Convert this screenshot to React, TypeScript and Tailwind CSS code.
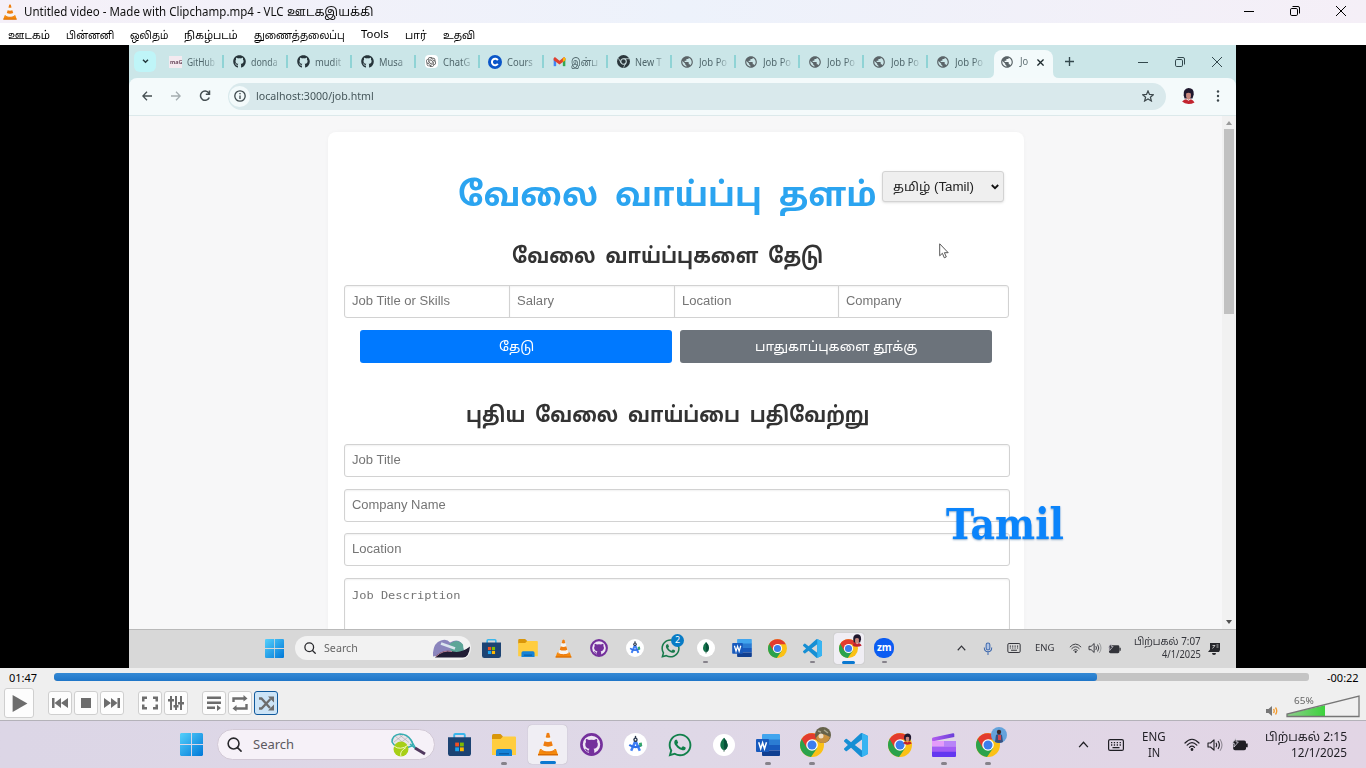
import React, { useLayoutEffect, useRef } from "react";
import { FaGithub, FaWhatsapp } from "react-icons/fa";
import { MdPublic } from "react-icons/md";
import { SiOpenai } from "react-icons/si";

/* Single line of text, stretched to fill the width of its box. */
function Fit({ className, children }: { className: string; children: React.ReactNode }) {
  const box = useRef<HTMLDivElement>(null);
  const text = useRef<HTMLSpanElement>(null);
  useLayoutEffect(() => {
    if (!box.current || !text.current) return;
    const s = box.current.clientWidth / text.current.offsetWidth;
    text.current.style.transform = `scaleX(${s})`;
  }, []);
  return (
    <div ref={box} className={`shrink-0 whitespace-nowrap ${className}`}>
      <span ref={text} className="inline-block origin-left">{children}</span>
    </div>
  );
}

const Cone = ({ className }: { className: string }) => (
  <svg viewBox="0 0 24 24" className={className}>
    <path d="M4 17h16l2 6H2z" fill="#f58a0b" />
    <path d="M2 22h20v1.5H2z" fill="#d96a00" />
    <path d="M10.7 1.5c.5-1 2.100-1 2.600 0L18.500 18.500c-2.500 2.300-10.500 2.300-13 0z" fill="#f7f5f2" />
    <path d="M10.700 1.500c.5-1 2.100-1 2.600 0l1 3.700c-1.200.7-3.400.7-4.600 0z" fill="#ee7d10" />
    <path d="M8.500 9.200c1.800 1 5.200 1 7 0l1.300 4.300c-2.500 1.500-7.100 1.500-9.600 0z" fill="#ee7d10" />
    <path d="M5.800 17.800c3 2 9.400 2 12.400 0l.5 1.500c-3 2.300-10.400 2.300-13.400 0z" fill="#ee7d10" />
  </svg>
);

const Windows = ({ className }: { className: string }) => (
  <svg viewBox="0 0 24 24" className={className}>
    <defs>
      <linearGradient id="win" x1="0" y1="0" x2="1" y2="1">
        <stop offset="0" stopColor="#55d0fb" />
        <stop offset="1" stopColor="#0078d8" />
      </linearGradient>
    </defs>
    <path d="M1 0h10.500v11.500H0V1zM12.500 0H23l1 1v10.500H12.500zM0 12.500h11.500V24H1l-1-1zM12.500 12.500H24V23l-1 1H12.500z" fill="url(#win)" />
  </svg>
);

const Store = ({ className }: { className: string }) => (
  <svg viewBox="0 0 24 24" className={className}>
    <path d="M6.500 6V2.200Q6.500 1 7.700 1h8.600q1.200 0 1.200 1.200V6" fill="none" stroke="#38b6ec" strokeWidth="2" />
    <path d="M0 4.500h24V21q0 3-3 3H3q-3 0-3-3z" fill="#1c4373" />
    <path d="M7.500 10h4v4h-4z" fill="#f25022" />
    <path d="M12.500 10h4v4h-4z" fill="#7fba00" />
    <path d="M7.500 15h4v4h-4z" fill="#19a5f0" />
    <path d="M12.500 15h4v4h-4z" fill="#ffb900" />
  </svg>
);

const Folder = ({ className }: { className: string }) => (
  <svg viewBox="0 0 24 22" className={className}>
    <path d="M0 1.500Q0 0 1.500 0h7L11 2.500V6H0z" fill="#d9960a" />
    <path d="M0 5h8.500L11 2.500h12q1 0 1 1V21H0z" fill="#ffcd3f" />
    <path d="M4 22v-5q0-2 2-2h12q2 0 2 2v5z" fill="#1583d8" />
    <path d="M7 19h10v1.500H7z" fill="#0b5ea8" />
  </svg>
);

const Studio = ({ className }: { className: string }) => (
  <svg viewBox="0 0 24 24" className={className}>
    <circle cx="12" cy="12" r="12" fill="#fff" />
    <path d="M12 8L7.500 18.500M12 8l4.500 10.500" stroke="#3f7ff5" strokeWidth="2.600" fill="none" />
    <path d="M5.500 12.500q6.500 4.500 13 0" stroke="#2d6fe8" strokeWidth="2.200" fill="none" />
    <path d="M15.500 10.500l3-.5.500 3.500-2.500 1z" fill="#35a56a" />
    <circle cx="12" cy="7" r="2.300" fill="#27354b" />
    <path d="M11.300 3h1.400v3h-1.400z" fill="#27354b" />
    <circle cx="12" cy="7" r=".9" fill="#fff" />
  </svg>
);

const GithubDesktop = ({ className }: { className: string }) => (
  <svg viewBox="0 0 24 24" className={className}>
    <circle cx="12" cy="12" r="10.500" fill="#eee6f4" stroke="#74309c" strokeWidth="2.800" />
    <path d="M6.300 6.200q1.500 0 3 1.200 2.700-.6 5.400 0 1.500-1.200 3-1.200.7 1.700.1 3.100 1.200 1.500.7 3.700-.7 3.200-4.300 3.500.7.9.7 2.200V22H9.200v-2.600q-2.600.6-3.500-2l-.7-1q2-.2 2.800 1.700.7.500 1.500.1 0-1 .6-1.700-3.700-.4-4.300-3.500-.5-2.200.7-3.700-.6-1.400 0-3.100z" fill="#74309c" />
  </svg>
);

const Mongo = ({ className }: { className: string }) => (
  <svg viewBox="0 0 24 24" className={className}>
    <circle cx="12" cy="12" r="12" fill="#fff" />
    <path d="M12 4q4 3.900 4 7.900T12 18Q8 16.100 8 11.900T12 4z" fill="#12734a" />
    <path d="M12 4q4 3.900 4 7.900T12 18z" fill="#09513a" />
    <path d="M12 16v3.500" stroke="#5e7d6d" strokeWidth=".9" />
  </svg>
);

const Word = ({ className }: { className: string }) => (
  <svg viewBox="0 0 24 22" className={className}>
    <path d="M7 0h16q1 0 1 1v5H6V1q0-1 1-1z" fill="#41a5ee" />
    <path d="M6 5.500h18V11H6z" fill="#2b7cd3" />
    <path d="M6 11h18v5.500H6z" fill="#185abd" />
    <path d="M6 16.500h18V21q0 1-1 1H7q-1 0-1-1z" fill="#103f91" />
    <rect x="0" y="5" width="13" height="13" rx="1" fill="#185abd" />
    <path d="M2.700 8.300l2 6.500 1.900-6 1.900 6 2-6.500" stroke="#fff" strokeWidth="1.500" fill="none" />
  </svg>
);

const Chrome = ({ className }: { className: string }) => (
  <svg viewBox="0 0 24 24" className={className}>
    <circle cx="12" cy="12" r="12" fill="#fbc116" />
    <path d="M12 12L1.600 6A12 12 0 0 0 11 23.960L17.200 15z" fill="#2ba24c" />
    <path d="M1.600 6A12 12 0 0 1 22.400 6.500H12L6.800 15z" fill="#e33b2e" />
    <circle cx="12" cy="12" r="5.800" fill="#fff" />
    <circle cx="12" cy="12" r="4.500" fill="#3b7ded" />
  </svg>
);

const VsCode = ({ className }: { className: string }) => (
  <svg viewBox="0 0 24 24" className={className}>
    <path fill="#168fd4" d="M23.150 2.587L18.210.210a1.494 1.494 0 0 0-1.705.290l-9.460 8.630-4.120-3.128a.999.999 0 0 0-1.276.057L.327 7.261A1 1 0 0 0 .326 8.740L3.899 12 .326 15.260a1 1 0 0 0 .001 1.479L1.650 17.940a.999.999 0 0 0 1.276.057l4.120-3.128 9.460 8.630a1.492 1.492 0 0 0 1.704.290l4.942-2.377A1.500 1.500 0 0 0 24 20.060V3.939a1.500 1.500 0 0 0-.850-1.352zm-5.146 14.861L10.826 12l7.178-5.448v10.896z" />
    <path fill="#37b4f2" d="M18.004.15L23.150 2.587A1.500 1.500 0 0 1 24 3.939V20.060a1.500 1.500 0 0 1-.85 1.350L18.004 23.900z" />
  </svg>
);

const Clipchamp = ({ className }: { className: string }) => (
  <svg viewBox="0 0 24 24" className={className}>
    <defs>
      <linearGradient id="cc" x1="0" y1="0" x2="1" y2="0">
        <stop offset="0" stopColor="#b25cf0" />
        <stop offset="1" stopColor="#6a3fd9" />
      </linearGradient>
    </defs>
    <path d="M1 4.500L21 .2q1.300-.2 1.300 1V4L1 8.200q-1 0-1-1.200V5.700q0-1 1-1.200z" fill="url(#cc)" />
    <path d="M0 8h24v5.500H0z" fill="#e49bfa" />
    <path d="M12 8h12v5.500H12z" fill="#b884f8" />
    <path d="M0 13.500h24v5.500H0z" fill="#a25cf5" />
    <path d="M0 18.800h24V23q0 1-1 1H1q-1 0-1-1z" fill="#6338f0" />
  </svg>
);

/* Small round profile pictures */
const Face = ({ className }: { className: string }) => (
  <svg viewBox="0 0 16 20" className={className}>
    <path d="M2 9Q1 1 8 0q7 0 6.500 8L13 13H3z" fill="#20182e" />
    <path d="M5 7q3-2 6 0v4q-1 4-3 4t-3-4z" fill="#c9897f" />
    <path d="M0 17q3-3 5-3l3 2 3-2q3 1 4.500 4Q12 20 8 20 3 20 0 17z" fill="#c2242f" />
  </svg>
);
const Dog = ({ className }: { className: string }) => (
  <svg viewBox="0 0 16 16" className={className}>
    <circle cx="8" cy="8" r="8" fill="#66624a" />
    <path d="M1 11q2-4 5-4t5 1l4 2q-2 6-7 6-5 0-7-5z" fill="#c9913f" />
    <circle cx="6" cy="9" r="2.500" fill="#f0dcc0" />
    <path d="M3 4l3 1M9 3l4 3" stroke="#a7a48b" strokeWidth="1.500" />
  </svg>
);
const Man = ({ className }: { className: string }) => (
  <svg viewBox="0 0 16 16" className={className}>
    <circle cx="8" cy="8" r="8" fill="#64a3dc" />
    <path d="M4 15l1-7q3-2 6 0l1 7q-4 2-8 0z" fill="#39507f" />
    <path d="M7 8h3v5H7z" fill="#d2474e" />
    <circle cx="8" cy="5" r="2.200" fill="#3d2a2a" />
  </svg>
);

const Keyboard = ({ className }: { className: string }) => (
  <svg viewBox="0 0 16 12" className={className} fill="none" stroke="currentColor">
    <rect x=".6" y=".6" width="14.800" height="10.800" rx="1.500" strokeWidth="1.200" />
    <path d="M3 3.700h1.300M5.800 3.700h1.300M8.700 3.700H10M11.600 3.700h1.300M3 6h1.300M5.800 6h1.300M8.700 6H10M11.600 6h1.300M4.500 8.700h7" strokeWidth="1.300" />
  </svg>
);
const Wifi = ({ className }: { className: string }) => (
  <svg viewBox="0 0 16 13" className={className} fill="none" stroke="currentColor" strokeWidth="1.200" strokeLinecap="round">
    <path d="M1 5q7-7.500 14 0M3.200 7.200q4.800-5 9.600 0M5.500 9.400q2.500-2.600 5 0" />
    <circle cx="8" cy="11.500" r=".8" fill="currentColor" />
  </svg>
);
const Sound = ({ className }: { className: string }) => (
  <svg viewBox="0 0 16 14" className={className} fill="none" stroke="currentColor" strokeWidth="1.100" strokeLinejoin="round">
    <path d="M1 5h2.500L7 1.800v10.400L3.500 9H1zM9 4.800q1.500 2.200 0 4.400M11 3q2.800 4 0 8" />
    <path d="M13 1.200q4 5.800 0 11.600" opacity=".4" />
  </svg>
);
const Battery = ({ className }: { className: string }) => (
  <svg viewBox="0 0 16 12" className={className}>
    <rect x="1.200" y="2" width="12.800" height="9.800" rx="1.800" fill="currentColor" />
    <path d="M14 5h1.700v3.800H14z" fill="currentColor" />
    <path d="M3.800 0L.3 5h2L2 8.500 6.300 3.500H4.200z" fill="currentColor" stroke="#ddd8e4" strokeWidth=".8" />
  </svg>
);
const Chevron = ({ className }: { className: string }) => (
  <svg viewBox="0 0 12 8" className={className} fill="none" stroke="currentColor" strokeWidth="1.500">
    <path d="M1 7l5-5.500L11 7" />
  </svg>
);
const Magnifier = ({ className }: { className: string }) => (
  <svg viewBox="0 0 16 16" className={className} fill="none" stroke="#28282c" strokeWidth="1.700" strokeLinecap="round">
    <circle cx="7" cy="7" r="5.800" />
    <path d="M11.300 11.300L15 15" />
  </svg>
);
const WinControls = ({ gap, color }: { gap: string; color: string }) => (
  <div className={`flex items-center ${gap} ${color}`}>
    <svg viewBox="0 0 10 10" className="size-[10px]" stroke="currentColor"><path d="M0 5.500h10" /></svg>
    <svg viewBox="0 0 10 10" className="size-[10px]" stroke="currentColor" fill="none">
      <rect x=".5" y="2.500" width="7" height="7" rx="1.300" />
      <path d="M2.500.5H8q1.500 0 1.500 1.500v5.500" />
    </svg>
    <svg viewBox="0 0 10 10" className="size-[10px]" stroke="currentColor"><path d="M0 0l10 10M10 0L0 10" /></svg>
  </div>
);

const menu: [string, string, string][] = [
  ["ஊடகம்", "w-[58px] pt-[2px]", "w-[42px]"],
  ["பின்னனி", "w-[64px] pt-[2px]", "w-[48px]"],
  ["ஒலிதம்", "w-[54px] pt-[2px]", "w-[38px]"],
  ["நிகழ்படம்", "w-[70px] pt-[2px]", "w-[54px]"],
  ["துணைத்தலைப்பு", "w-[107px] pt-[2px]", "w-[91px]"],
  ["Tools", "w-[44px]", "w-[28px]"],
  ["பார்", "w-[38px] pt-[2px]", "w-[22px]"],
  ["உதவி", "w-[50px] pt-[2px]", "w-[32px]"],
];

const globe = <MdPublic className="size-[14px] text-[#5b6468]" />;
const gh = <FaGithub className="size-[13px] text-[#26343a]" />;
const tabs: [React.ReactNode, string, string][] = [
  [<Fit className="w-[13px] bg-[#f4eaf0] px-px text-[5px] leading-[12px] font-bold text-[#6d4c60]">maG</Fit>, "GitHub", "w-[28px]"],
  [gh, "donda", "w-[27px]"],
  [gh, "mudit", "w-[26px]"],
  [gh, "Musa", "w-[24px]"],
  [<div className="flex size-[13px] items-center justify-center rounded-sm bg-white"><SiOpenai className="size-[10px] text-[#444]" /></div>, "ChatG", "w-[27px]"],
  [
    <svg viewBox="0 0 14 14" className="size-[14px]"><circle cx="7" cy="7" r="7" fill="#0a56c8" /><path d="M9.800 5.200a3.200 3.200 0 1 0 0 3.600" stroke="#fff" strokeWidth="2" fill="none" /></svg>,
    "Cours", "w-[26px]",
  ],
  [
    <svg viewBox="0 0 14 12" className="h-[10px] w-[13px]"><path d="M0 2h3v9H0z" fill="#4285f4" /><path d="M11 2h3v9h-3z" fill="#34a853" /><path d="M0 1.500L1.500 0 7 4.500 12.500 0 14 1.500V4L7 9 0 4z" fill="#e0402f" /><path d="M11 2l1.500-2L14 1.500V4l-3 2z" fill="#fbbc04" /></svg>,
    "இன்ப", "w-[27px]",
  ],
  [
    <svg viewBox="0 0 14 14" className="size-[13px]"><circle cx="7" cy="7" r="7" fill="#2b373c" /><circle cx="7" cy="7" r="3" fill="#2b373c" stroke="#cfe2e4" strokeWidth="1.200" /><path d="M7 4h6M4.400 8.500L1.500 3.500M9.500 8.500L7 13.500" stroke="#cfe2e4" strokeWidth=".8" /></svg>,
    "New T", "w-[27px]",
  ],
  [globe, "Job Po", "w-[28px]"],
  [globe, "Job Po", "w-[28px]"],
  [globe, "Job Po", "w-[28px]"],
  [globe, "Job Po", "w-[28px]"],
  [globe, "Job Po", "w-[28px]"],
];

function TabStrip() {
  return (
    <div className="flex h-[33px] items-center bg-[#cbe6e8]">
      <div className="ml-[5px] flex h-[21px] w-[22px] shrink-0 items-center justify-center rounded-md bg-[#bff5f8]">
        <svg viewBox="0 0 8 6" className="h-[5px] w-[7px]" fill="none" stroke="#24393e" strokeWidth="1.700"><path d="M1 1l3 3 3-3" /></svg>
      </div>
      <div className="ml-[5px] flex">
        {tabs.map(([icon, label, width], i) => (
          <div key={i} className="flex h-[14px] w-[64px] shrink-0 items-center">
            <div className="ml-[7px] flex w-[14px] justify-center">{icon}</div>
            <div className="ml-[5px] w-[28px] text-[10.500px] leading-[14px] text-[#4f666b] [mask-image:linear-gradient(90deg,#000_65%,rgba(0,0,0,0.2))]">
              <Fit className={width}>{label}</Fit>
            </div>
            <div className={`ml-[7px] h-[13px] w-[2px] ${i === tabs.length - 1 ? "" : "bg-[#8fd3d5]"}`} />
          </div>
        ))}
      </div>
      <div className="flex items-end self-end">
        <svg viewBox="0 0 6 6" className="-ml-[5px] size-[6px]"><path d="M6 0v6H0q6 0 6-6z" fill="#f3fafb" /></svg>
        <div className="flex h-[28px] w-[59px] items-center rounded-t-lg bg-[#f3fafb] pb-1">
          <MdPublic className="ml-[6px] size-[14px] shrink-0 text-[#5b6468]" />
          <Fit className="ml-[6px] w-[8px] text-[10.500px] text-[#5f6f73]">Jo</Fit>
          <svg viewBox="0 0 8 8" className="ml-[9px] size-[7px]" stroke="#1d2a2d" strokeWidth="1.500"><path d="M.5.5l7 7M7.500.5l-7 7" /></svg>
        </div>
        <svg viewBox="0 0 6 6" className="size-[6px]"><path d="M0 0v6h6Q0 6 0 0z" fill="#f3fafb" /></svg>
      </div>
      <svg viewBox="0 0 10 10" className="ml-[6px] size-[9px]" stroke="#33484d" strokeWidth="1.500"><path d="M5 0v10M0 5h10" /></svg>
      <div className="mr-[14px] ml-auto"><WinControls gap="gap-[27px]" color="text-[#33484d]" /></div>
    </div>
  );
}

function Toolbar() {
  return (
    <div className="flex h-[38px] items-center rounded-t-lg border-b border-[#dce9eb] bg-[#f4fafb] pb-px text-[#454f52]">
      <svg viewBox="0 0 10 10" className="ml-[13px] size-[10px]" fill="none" stroke="currentColor" strokeWidth="1.300"><path d="M10 5H1M5 .8L.8 5 5 9.200" /></svg>
      <svg viewBox="0 0 10 10" className="ml-[19px] size-[10px] text-[#a4adb0]" fill="none" stroke="currentColor" strokeWidth="1.300"><path d="M0 5h9M5 .8L9.200 5 5 9.200" /></svg>
      <svg viewBox="0 0 12 12" className="ml-[18px] size-[12px]" fill="none" stroke="currentColor" strokeWidth="1.500"><path d="M10.300 7.500a4.600 4.600 0 1 1-.5-4.500M10.500.5v3.700H6.800" /></svg>
      <div className="ml-[17px] flex h-[27px] w-[938px] items-center rounded-full bg-[#d9e9ec]">
        <div className="ml-[1px] flex size-[21px] items-center justify-center rounded-full bg-[#f3fafb]">
          <svg viewBox="0 0 12 12" className="size-[12px]" fill="none" stroke="#3c474b" strokeWidth="1.300"><circle cx="6" cy="6" r="5.200" /><path d="M6 5.500V9M6 3v1.300" /></svg>
        </div>
        <Fit className="ml-[6px] w-[118px] text-[11px] text-[#45565a]">localhost:3000/job.html</Fit>
        <svg viewBox="0 0 12 12" className="mr-[12px] ml-auto size-[12px]" fill="none" stroke="#3c474b" strokeWidth="1.200"><path d="M6 .9l1.500 3.500 3.900.3-3 2.500 1 3.800L6 9 2.600 11l1-3.800-3-2.500 3.900-.3z" /></svg>
      </div>
      <Face className="ml-[16px] h-[16px] w-[13px]" />
      <svg viewBox="0 0 4 12" className="ml-[21px] h-[12px] w-[4px]" fill="#3c474b"><circle cx="2" cy="1.500" r="1.200" /><circle cx="2" cy="6" r="1.200" /><circle cx="2" cy="10.500" r="1.200" /></svg>
    </div>
  );
}

const field = "flex h-[33px] items-center border border-[#d2d2d2] bg-white pb-[2px] pl-[7px] shadow-[inset_0_1px_2px_rgba(0,0,0,0.06)]";
const ph = "text-[12px] leading-4 text-[#757575]";

function JobPage() {
  return (
    <div className="flex h-[513px] overflow-hidden bg-[#f7f7f8] font-['Liberation_Sans','Noto_Sans_Tamil',sans-serif]">
      <div className="mt-4 ml-[199px] h-[520px] w-[696px] rounded-lg bg-white px-[15px] shadow-[0_0_4px_rgba(0,0,0,0.03)]">
        <div className="flex h-[112px] pt-[39px] pl-[115px]">
          <Fit className="mt-[-1px] h-[50px] w-[419px] text-[33px] leading-[50px] font-bold text-[#2ba4f0] [word-spacing:8px]">வேலை வாய்ப்பு தளம்</Fit>
          <div className="ml-[5px] flex h-[31px] w-[122px] items-center rounded-[3px] border border-[#d3d3d3] bg-[#efefef] shadow-sm">
            <Fit className="ml-[10px] w-[81px] text-[12px] text-[#222]">தமிழ் (Tamil)</Fit>
            <svg viewBox="0 0 8 6" className="ml-[17px] h-[6px] w-[8px]" fill="none" stroke="#111" strokeWidth="1.800"><path d="M.8 1L4 4.200 7.200 1" /></svg>
          </div>
        </div>
        <Fit className="-mt-[5px] ml-[169px] h-[34px] w-[311px] text-[21.500px] leading-[34px] font-bold text-[#333] [word-spacing:5px]">வேலை வாய்ப்புகளை தேடு</Fit>
        <div className="mt-[12px] ml-px flex">
          <div className={`${field} w-[166px] rounded-l-[3px]`}><Fit className={`w-[98px] ${ph}`}>Job Title or Skills</Fit></div>
          <div className={`${field} -ml-px w-[166px]`}><Fit className={`w-[37px] ${ph}`}>Salary</Fit></div>
          <div className={`${field} -ml-px w-[166px]`}><Fit className={`w-[49px] ${ph}`}>Location</Fit></div>
          <div className={`${field} -ml-px w-[171px] rounded-r-[3px]`}><Fit className={`w-[55px] ${ph}`}>Company</Fit></div>
        </div>
        <div className="mt-[12px] flex gap-2 pl-[17px] text-white">
          <div className="flex h-[33px] w-[312px] items-center justify-center rounded-[3px] bg-[#0079ff]"><Fit className="w-[35px] text-[13px]">தேடு</Fit></div>
          <div className="flex h-[33px] w-[312px] items-center justify-center rounded-[3px] bg-[#6c737b]"><Fit className="w-[163px] text-[13px]">பாதுகாப்புகளை தூக்கு</Fit></div>
        </div>
        <Fit className="mt-[35px] ml-[123px] h-[34px] w-[403px] text-[21.500px] leading-[34px] font-bold text-[#333] [word-spacing:5px]">புதிய வேலை வாய்ப்பை பதிவேற்று</Fit>
        <div className={`${field} mt-[12px] ml-px w-[666px] rounded-[3px]`}><Fit className={`w-[49px] ${ph}`}>Job Title</Fit></div>
        <div className={`${field} mt-[12px] ml-px w-[666px] rounded-[3px]`}><Fit className={`w-[94px] ${ph}`}>Company Name</Fit></div>
        <div className={`${field} mt-[11px] ml-px w-[666px] rounded-[3px]`}><Fit className={`w-[49px] ${ph}`}>Location</Fit></div>
        <div className="mt-[12px] ml-px h-[80px] w-[666px] rounded-[3px] border border-[#d2d2d2] pt-[9px] pl-[7px] shadow-[inset_0_1px_2px_rgba(0,0,0,0.06)]">
          <Fit className="w-[108px] font-['DejaVu_Sans_Mono'] text-[11px] leading-4 text-[#757575]">Job Description</Fit>
        </div>
      </div>
      <div className="ml-auto flex w-[14px] flex-col items-center bg-[#f1f1f1] pt-[5px] pb-[5px]">
        <svg viewBox="0 0 6 4" className="h-[4px] w-[6px]" fill="#9a9a9a"><path d="M0 4l3-4 3 4z" /></svg>
        <div className="mt-[4px] h-[185px] w-[10px] bg-[#c1c1c1]" />
        <svg viewBox="0 0 6 4" className="mt-auto h-[4px] w-[6px]" fill="#505050"><path d="M0 0h6L3 4z" /></svg>
      </div>
    </div>
  );
}

function Slot({ children, active, dot, inner }: { children: React.ReactNode; active?: boolean; dot?: boolean; inner?: boolean }) {
  const shape = inner
    ? "h-[31px] w-[30px] rounded-[3px]"
    : "h-[39px] w-[39px] rounded-[4px]";
  return (
    <div className="flex h-full flex-1 items-center justify-center">
      <div className={`relative flex items-center justify-center ${shape} ${active ? "bg-[#f0eef4] shadow-[0_0_1px_rgba(0,0,0,0.3)]" : ""}`}>
        {children}
        {active && <div className={`absolute bottom-0 h-[3px] rounded-full bg-[#0a78d0] ${inner ? "w-[13px]" : "w-[16px]"}`} />}
        {dot && <div className={`absolute rounded-full bg-[#86828a] ${inner ? "bottom-[1px] h-[2px] w-[5px]" : "-bottom-px h-[3px] w-[6px]"}`} />}
      </div>
    </div>
  );
}

function InnerTaskbar() {
  return (
    <div className="flex h-[39px] items-center border-t border-[#b9b9b9] bg-[#d8d8d8] pb-[2px] text-[#33343a]">
      <Windows className="ml-[136px] size-[19px]" />
      <div className="ml-[11px] flex h-[24px] w-[176px] items-center overflow-hidden rounded-full bg-[#f2f2f2]">
        <Magnifier className="ml-[9px] size-[12px]" />
        <Fit className="ml-[8px] w-[34px] text-[11px] text-[#666]">Search</Fit>
        <svg viewBox="0 0 38 18" className="ml-auto h-[19px] w-[38px]">
          <path d="M0 13Q1 3 8 1q6-2 9 2 7-4 11 0l3 8-31 6z" fill="#8b85bd" />
          <path d="M16 5q8-7 14 0l1 9-12 1z" fill="#5da598" />
          <path d="M8 4l14 5" stroke="#dbe4ef" strokeWidth="2.500" />
          <path d="M2 18q7-9 18-6 8 2 17-5-1 11-7 11z" fill="#211d35" />
          <path d="M3 17q7-7 16-5" stroke="#b77d95" fill="none" />
        </svg>
      </div>
      <div className="ml-[3px] flex h-full w-[428px]">
        <Slot inner><Store className="size-[19px]" /></Slot>
        <Slot inner><Folder className="h-[18px] w-[20px]" /></Slot>
        <Slot inner><Cone className="size-[19px]" /></Slot>
        <Slot inner><GithubDesktop className="size-[18px]" /></Slot>
        <Slot inner><Studio className="size-[18px]" /></Slot>
        <Slot inner>
          <FaWhatsapp className="size-[21px] text-[#187a4c]" />
          <div className="absolute top-[1px] right-[1px] flex size-[13px] items-center justify-center rounded-full bg-[#087bc5] text-[9px] text-white">2</div>
        </Slot>
        <Slot inner dot><Mongo className="size-[18px]" /></Slot>
        <Slot inner><Word className="h-[18px] w-[20px]" /></Slot>
        <Slot inner><Chrome className="size-[19px]" /></Slot>
        <Slot inner dot><VsCode className="size-[19px]" /></Slot>
        <Slot inner active><Chrome className="size-[19px]" /><Face className="absolute top-[1px] right-[2px] h-[13px] w-[10px]" /></Slot>
        <Slot inner dot><div className="flex size-[20px] items-center justify-center rounded-[9px] bg-[#0b5cf2] pb-px text-[10px] font-bold text-white">zm</div></Slot>
      </div>
      <Chevron className="ml-[55px] h-[6px] w-[9px] shrink-0" />
      <svg viewBox="0 0 10 14" className="ml-[17px] h-[13px] w-[10px] shrink-0" fill="none" stroke="#3f69ae" strokeWidth="1.100"><rect x="3" y="1" width="4" height="7.500" rx="2" fill="#b1c4e3" /><path d="M1 6q0 4.500 4 4.500T9 6M5 10.500V14" /></svg>
      <Keyboard className="ml-[14px] h-[10px] w-[14px] shrink-0" />
      <Fit className="ml-[14px] w-[19px] text-[9px]">ENG</Fit>
      <Wifi className="ml-[15px] h-[10px] w-[13px] shrink-0" />
      <Sound className="ml-[6px] h-[12px] w-[14px] shrink-0" />
      <Battery className="ml-[6px] h-[11px] w-[13px] shrink-0" />
      <div className="ml-[13px] flex shrink-0 flex-col items-end">
        <Fit className="h-[13px] w-[67px] text-[10px] leading-[13px]">பிற்பகல் 7:07</Fit>
        <Fit className="h-[13px] w-[39px] text-[10px] leading-[13px]">4/1/2025</Fit>
      </div>
      <svg viewBox="0 0 12 13" className="ml-[7px] h-[13px] w-[12px] shrink-0" fill="#26272b"><path d="M2 1h10v7l-1 2H0l2-2.500zM4 11h4q0 2-2 2t-2-2z" /><path d="M4.500 6.500l2.500-3H4.500M8.500 3h2M8.500 5h2" stroke="#ddd" strokeWidth=".8" fill="none" /></svg>
    </div>
  );
}

function PlayerButton({ children, active, big }: { children: React.ReactNode; active?: boolean; big?: boolean }) {
  return (
    <div className={`flex shrink-0 items-center justify-center rounded-[3px] border ${big ? "size-[30px]" : "size-[24px]"} ${active ? "border-[#10599c] bg-[#cce4f7]" : "border-[#cfcfcf] bg-[#fdfdfd]"}`}>
      <svg viewBox="0 0 18 18" className={big ? "size-[19px]" : "size-[18px]"} fill="#6d6d6d" stroke="#6d6d6d" strokeWidth="0">
        {children}
      </svg>
    </div>
  );
}

function PlayerControls() {
  return (
    <div className="flex h-[53px] flex-col border-b border-[#b4b2b9] bg-[#efefef]">
      <div className="flex h-[19px] items-center">
        <Fit className="ml-[9px] w-[28px] text-[11px] leading-[18px] text-black">01:47</Fit>
        <div className="mb-px ml-[17px] h-[8px] w-[1255px] overflow-hidden rounded-[3px] bg-[#c4c4c4]">
          <div className="h-full w-[1043px] rounded-[3px] bg-linear-to-b from-[#3389d5] to-[#1f76c8]" />
        </div>
        <Fit className="ml-[18px] w-[32px] text-[11px] leading-[18px] text-black">-00:22</Fit>
      </div>
      <div className="flex h-[32px] items-center pl-1">
        <PlayerButton big><path d="M2.500 1L16.500 9 2.500 17z" /></PlayerButton>
        <div className="ml-[14px] flex gap-[2px]">
          <PlayerButton><path d="M1 4h2.500v10H1zM10 4v10L3.500 9zM17 4v10l-7-5z" /></PlayerButton>
          <PlayerButton><path d="M4 4h10v10H4z" /></PlayerButton>
          <PlayerButton><path d="M14.500 4H17v10h-2.500zM8 4v10l6.500-5zM1 4v10l7-5z" /></PlayerButton>
        </div>
        <div className="ml-[14px] flex gap-[2px]">
          <PlayerButton><path d="M1 2.500h5V5H3.500v2.500H1zM12 2.500h5v5h-2.500V5H12zM1 10.500h2.500V13H6v2.500H1zM14.500 10.500H17v5h-5V13h2.500z" /></PlayerButton>
          <PlayerButton><path d="M3 2h2v14H3zM8 2h2v14H8zM13 2h2v14h-2zM1 5h6v2.500H1zM6.500 11h5v2.500h-5zM11 8h6v2.500h-6z" /></PlayerButton>
        </div>
        <div className="ml-[14px] flex gap-[2px]">
          <PlayerButton><path d="M2 2.500h14V5H2zM2 7.500h14V10H2zM2 12.500h8V15H2zM12 11l4 3-4 3z" /></PlayerButton>
          <PlayerButton><path d="M2.500 8V4.500H14M15.500 10v4.500H4" fill="none" strokeWidth="2.400" /><path d="M12.500 1l4 3.500-4 3zM5.500 11l-4 3.500 4 3z" /></PlayerButton>
          <PlayerButton active><path d="M2 4.500h2.500l8.500 9.500M2 14.500h2.500L13.500 5" fill="none" strokeWidth="2.300" /><path d="M11 2.500h6v6zM11 16.500h6v-6z" /></PlayerButton>
        </div>
        <svg viewBox="0 0 12 12" className="mt-[16px] ml-auto size-[12px]"><path d="M0 4h2.500L6 1v10L2.500 8H0z" fill="#777" /><path d="M7.500 4q1.500 2 0 4M9.500 2.500q2.500 3.500 0 7" stroke="#f39a2c" strokeWidth="1.300" fill="none" /></svg>
        <div className="relative mt-[5px] mr-[6px] ml-[8px] h-[24px] w-[74px]">
          <svg viewBox="0 0 74 24" className="h-[24px] w-[74px]">
            <defs><linearGradient id="vol"><stop offset="0" stopColor="#8fce8d" /><stop offset="1" stopColor="#3cd23c" /></linearGradient></defs>
            <path d="M1 22V20L39 11.200V22z" fill="url(#vol)" />
            <path d="M1 22.500V20L73 2v20.500z" fill="none" stroke="#767676" strokeWidth="1.300" />
          </svg>
          <Fit className="absolute top-[2px] left-[8px] w-[20px] text-[9px] leading-[10px] text-[#666]">65%</Fit>
        </div>
      </div>
    </div>
  );
}

function Taskbar() {
  return (
    <div className="flex h-[47px] items-center bg-linear-to-r from-[#dcd6e6] via-[#dfd8e7] to-[#e2d5e5] text-[#1f1e24]">
      <Windows className="ml-[180px] size-[23px] shrink-0" />
      <div className="ml-[14px] flex h-[31px] w-[218px] shrink-0 items-center rounded-full border border-[#d2c9d6] bg-[#f6f1f8]">
        <Magnifier className="ml-[9px] size-[15px]" />
        <Fit className="ml-[11px] w-[41px] text-[13px] text-[#5c5960]">Search</Fit>
        <svg viewBox="0 0 36 24" className="mr-[7px] ml-auto h-[24px] w-[36px]">
          <path d="M1 9Q1 2 9 1q7 0 11 6 4 6-2 7-12 4-17-5z" fill="#e8e4e8" stroke="#36aeb2" strokeWidth="1.500" />
          <path d="M4 3l12 10M8 1.500l10 8M3 9L12 2M7 12L17 4" stroke="#a9a5ae" strokeWidth=".6" />
          <path d="M19 11l6 5M20 7l5 9" stroke="#36aeb2" strokeWidth="1.500" />
          <path d="M24 15l10 6" stroke="#51395f" strokeWidth="3" />
          <circle cx="10" cy="16" r="7.500" fill="#a7cf17" />
          <path d="M3 13q6 5 14.500-1M10 23.500q-2-5 5-9" stroke="#eef6bd" fill="none" />
        </svg>
      </div>
      <div className="ml-[2.500px] flex h-full w-[573px] shrink-0">
        <Slot><Store className="size-[23px]" /></Slot>
        <Slot dot><Folder className="h-[22px] w-[24px]" /></Slot>
        <Slot active><Cone className="mb-[2px] size-[24px]" /></Slot>
        <Slot><GithubDesktop className="size-[23px]" /></Slot>
        <Slot><Studio className="size-[23px]" /></Slot>
        <Slot><FaWhatsapp className="size-[26px] text-[#11804b]" /></Slot>
        <Slot><Mongo className="size-[22px]" /></Slot>
        <Slot dot><Word className="h-[22px] w-[24px]" /></Slot>
        <Slot dot><Chrome className="size-[24px]" /><Dog className="absolute top-[2px] right-[1px] size-[16px]" /></Slot>
        <Slot><VsCode className="size-[24px]" /></Slot>
        <Slot><Chrome className="size-[24px]" /><Face className="absolute top-[8px] right-[8px] h-[12px] w-[9px]" /></Slot>
        <Slot dot><Clipchamp className="size-[24px]" /></Slot>
        <Slot dot><Chrome className="size-[24px]" /><Man className="absolute top-[2px] right-[1px] size-[16px]" /></Slot>
      </div>
      <Chevron className="ml-[67.500px] h-[7px] w-[11px] shrink-0" />
      <Keyboard className="ml-[19px] h-[12px] w-[16px] shrink-0" />
      <div className="ml-[18px] flex w-[24px] shrink-0 flex-col items-center">
        <Fit className="h-[16px] w-[24px] text-[12px] leading-[16px]">ENG</Fit>
        <Fit className="h-[16px] w-[12px] text-[12px] leading-[16px]">IN</Fit>
      </div>
      <Wifi className="ml-[18px] h-[13px] w-[16px] shrink-0" />
      <Sound className="ml-[7px] h-[14px] w-[16px] shrink-0" />
      <Battery className="ml-[9px] h-[13px] w-[16px] shrink-0" />
      <div className="mr-[19px] ml-auto flex shrink-0 flex-col items-end">
        <Fit className="h-[16px] w-[82px] text-[12px] leading-[16px]">பிற்பகல் 2:15</Fit>
        <Fit className="h-[16px] w-[56px] text-[12px] leading-[16px]">12/1/2025</Fit>
      </div>
    </div>
  );
}

export default function App() {
  return (
    <div className="flex h-[768px] w-[1366px] flex-col overflow-hidden bg-black font-['Noto_Sans','Noto_Sans_Tamil',sans-serif]">
      <div className="flex h-[23px] items-center bg-linear-to-r from-[#f5f0f8] via-[#edf2fb] to-[#f5eff7]">
        <Cone className="ml-[2px] size-[16px] shrink-0" />
        <Fit className="ml-[6px] w-[260px] text-[12px] leading-[22px] text-[#111]">Untitled video - Made with Clipchamp.mp4 - VLC</Fit>
        <Fit className="ml-[3px] w-[86px] text-[12px] leading-[22px] text-[#111]">ஊடகஇயக்கி</Fit>
        <div className="mr-[20px] mb-[2px] ml-auto"><WinControls gap="gap-[36px]" color="text-black" /></div>
      </div>
      <div className="flex h-[22px] items-center bg-white pl-2">
        {menu.map(([label, cell, text]) => (
          <div key={label} className={cell}>
            <Fit className={`${text} text-[11px] leading-[20px] text-black`}>{label}</Fit>
          </div>
        ))}
      </div>
      <div className="relative flex h-[623px] justify-center bg-black">
        <div className="mr-px flex w-[1107px] flex-col bg-[#cbe6e8]">
          <TabStrip />
          <Toolbar />
          <JobPage />
          <InnerTaskbar />
        </div>
        <svg viewBox="0 0 10 16" className="absolute top-[198px] left-[939px] h-[16px] w-[10px]" fill="#fff" stroke="#444" strokeWidth=".9"><path d="M.7.8v12l2.700-2.500 1.900 4.500 2-.9-1.900-4.200h3.800z" /></svg>
        <div className="absolute top-[450px] left-[946px] font-['DejaVu_Serif'] text-[43px] leading-[58px] font-bold text-[#0b84fb] [text-shadow:0_1px_2px_rgba(0,70,140,0.45)]">
          <Fit className="w-[118px]">Tamil</Fit>
        </div>
      </div>
      <PlayerControls />
      <Taskbar />
    </div>
  );
}
